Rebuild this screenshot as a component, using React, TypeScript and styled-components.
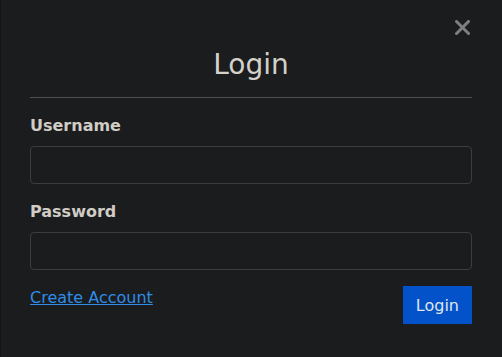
import React from 'react';
import styled, { createGlobalStyle } from 'styled-components';

const GlobalStyle = createGlobalStyle`
    body {
        margin: 0;
        background: #1b1c1e;
        font-family: "DejaVu Sans", sans-serif;
    }
`

const Modal = styled.div`
    position: relative;
    box-sizing: border-box;
    width: 502px;
    height: 357px;
    background: #1b1c1e;
    border-left: 1px solid #131416;
    padding: 0 30px 0 29px;
`

const Header = styled.div`
    padding: 48px 0 15px;
    border-bottom: 1px solid #4e4f51;
`

const Title = styled.h1`
    margin: 0;
    text-align: center;
    font-size: 28px;
    line-height: 34px;
    font-weight: 400;
    color: #d4d0ca;
`

const CloseButton = styled.button`
    position: absolute;
    top: 20px;
    right: 32px;
    width: 15px;
    height: 15px;
    padding: 0;
    border: none;
    background: none;
    cursor: pointer;
    display: flex;
`

const Form = styled.form`
    padding-top: 16px;
`

const Field = styled.div`
    margin-bottom: 16px;
`

const Label = styled.label`
    display: block;
    margin-bottom: 8px;
    font-size: 16px;
    line-height: 24px;
    font-weight: 700;
    color: #d0ccc6;
`

const Input = styled.input`
    display: block;
    box-sizing: border-box;
    width: 100%;
    height: 38px;
    border: 1px solid #3b3d40;
    border-radius: 4px;
    background: #1b1c1e;
    color: #d0ccc6;
    font: inherit;
    padding: 0 12px;
    outline: none;
`

const Footer = styled.div`
    display: flex;
    justify-content: space-between;
    align-items: flex-start;
    margin-top: 16px;
`

const Link = styled.a`
    margin-top: 2px;
    font-size: 16px;
    line-height: 20px;
    color: #2e8de8;
    text-decoration: underline;
    cursor: pointer;
`

const SubmitButton = styled.button`
    height: 38px;
    padding: 0 13px;
    border: none;
    background: #0352c9;
    color: #dfe6f0;
    font-family: inherit;
    font-size: 16px;
    cursor: pointer;
`

const LoginModal = () => {
    const fields = ['Username', 'Password'];

    return (
        <Modal>
            <Header>
                <Title>Login</Title>
            </Header>
            <CloseButton aria-label="Close">
                <svg width="15" height="15" viewBox="0 0 15 15">
                    <path d="M1.5 1.5 L13.5 13.5 M13.5 1.5 L1.5 13.5" stroke="#7e7f80" strokeWidth="3" strokeLinecap="square" />
                </svg>
            </CloseButton>
            <Form onSubmit={(e) => e.preventDefault()}>
                { fields.map((name) => (
                    <Field key={name}>
                        <Label htmlFor={name}>{name}</Label>
                        <Input id={name} type={name === 'Password' ? 'password' : 'text'} />
                    </Field>
                )) }
                <Footer>
                    <Link href="#">Create Account</Link>
                    <SubmitButton type="submit">Login</SubmitButton>
                </Footer>
            </Form>
        </Modal>
    );
};

const App = () => (
    <>
        <GlobalStyle />
        <LoginModal />
    </>
);

export default App;
